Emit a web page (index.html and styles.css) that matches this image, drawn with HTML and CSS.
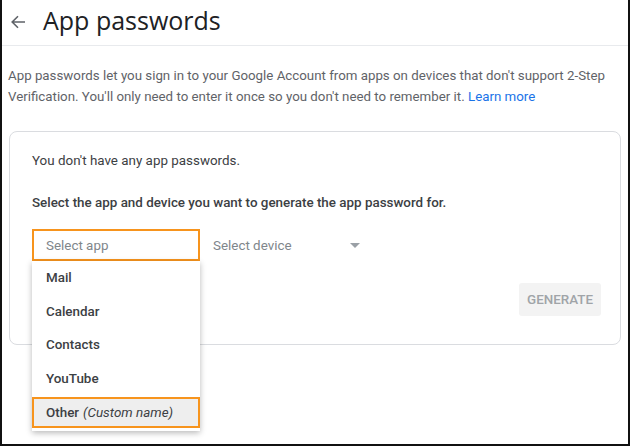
FILE: index.html
```html
<!DOCTYPE html>
<html>
<head>
<meta charset="utf-8">
<link rel="stylesheet" href="styles.css">
</head>
<body>
<div class="page">
  <header class="header">
    <svg class="back" width="16" height="16" viewBox="0 0 16 16"><path d="M15 8H2.5M8 2.2L2.2 8L8 13.8" fill="none" stroke="#5f6368" stroke-width="1.6"/></svg>
    <h1 class="title">App passwords</h1>
  </header>
  <p class="desc">App passwords let you sign in to your Google Account from apps on devices that don't support 2-Step Verification. You'll only need to enter it once so you don't need to remember it. <a class="link" href="#">Learn more</a></p>
  <section class="card">
    <p class="none">You don't have any app passwords.</p>
    <p class="instr">Select the app and device you want to generate the app password for.</p>
    <div class="row">
      <div class="select-app">
        <div class="field">Select app</div>
        <ul class="menu">
          <li class="item">Mail</li>
          <li class="item">Calendar</li>
          <li class="item">Contacts</li>
          <li class="item">YouTube</li>
          <li class="item active">Other <em>(Custom name)</em></li>
        </ul>
      </div>
      <div class="select-device">
        <span>Select device</span>
        <span class="caret"></span>
      </div>
    </div>
    <div class="actions">
      <button class="gen">GENERATE</button>
    </div>
  </section>
</div>
</body>
</html>
```
FILE: styles.css
```css
html, body { margin: 0; padding: 0; background: #fff; }
body { font-family: Roboto, "Noto Sans", Arial, sans-serif; color: #3c4043; }
.page {
  box-sizing: border-box;
  width: 630px;
  height: 446px;
  border: 2px solid #111;
  border-top: none;
  overflow: hidden;
}
.header {
  display: flex;
  align-items: center;
  height: 46px;
  box-sizing: border-box;
  border-bottom: 1px solid #e8eaed;
}
.back { margin-left: 8px; margin-top: -1px; }
.title {
  margin: 0 0 0 17px;
  font-family: "Open Sans", Roboto, sans-serif;
  font-weight: 400;
  font-size: 25px;
  color: #202124;
  position: relative;
  top: -3px;
}
.desc {
  margin: 19px 6px 0 6px;
  font-size: 13.3px;
  line-height: 21px;
  color: #5f6368;
}
.link { color: #1a73e8; text-decoration: none; }
.card {
  margin: 24px 7px 0 7px;
  border: 1px solid #dadce0;
  border-radius: 8px;
  padding: 20px 19px 28px 22px;
}
.none { margin: 0; font-size: 13.4px; line-height: 18px; color: #3c4043; }
.instr { margin: 24px 0 0; font-size: 13.4px; line-height: 18px; font-weight: 500; color: #3c4043; }
.row { display: flex; margin-top: 17px; }
.select-app { position: relative; width: 168px; }
.field {
  box-sizing: border-box;
  height: 32px;
  border: 2px solid #f7941d;
  padding: 0 12px;
  display: flex;
  align-items: center;
  font-size: 13.4px;
  color: #80868b;
}
.menu {
  position: absolute;
  top: 32px;
  left: 0;
  width: 168px;
  margin: 0;
  padding: 0 0 3px;
  list-style: none;
  background: #fff;
  box-shadow: 0 2px 6px rgba(0,0,0,0.28);
  z-index: 2;
}
.item {
  box-sizing: border-box;
  height: 33.6px;
  padding: 0 14px;
  display: flex;
  align-items: center;
  font-size: 13.4px;
  font-weight: 500;
  color: #3c4043;
}
.item em { font-style: italic; font-weight: 400; margin-left: 4px; }
.item.active {
  background: #eeeeee;
  border: 2px solid #f7941d;
  height: 31px;
  margin-top: 2px;
  padding: 0 12px;
}
.select-device {
  display: flex;
  align-items: center;
  width: 147px;
  margin-left: 13px;
  font-size: 13.4px;
  color: #80868b;
  justify-content: space-between;
}
.caret {
  width: 0; height: 0;
  border-left: 5px solid transparent;
  border-right: 5px solid transparent;
  border-top: 5px solid #9aa0a6;
  margin-right: 0;
}
.actions { display: flex; justify-content: flex-end; margin-top: 22px; }
.gen {
  border: none;
  background: #f3f3f3;
  border-radius: 3px;
  width: 82px;
  height: 33px;
  font-family: Roboto, sans-serif;
  font-size: 13.4px;
  font-weight: 500;
  color: #a0a4a8;
  padding: 0;
}
```
